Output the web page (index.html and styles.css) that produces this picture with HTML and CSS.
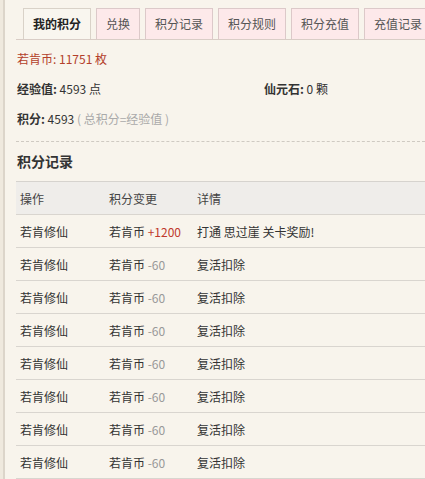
FILE: index.html
```html
<!DOCTYPE html>
<html lang="zh-CN">
<head>
    <meta charset="UTF-8">
    <meta name="viewport" content="width=device-width, initial-scale=1.0">
    <title>我的积分</title>
    <link rel="stylesheet" href="styles.css">
</head>
<body>

<div class="frame">
    <div class="panel">
        <ul class="tabs">
            <li class="tab active">我的积分</li>
            <li class="tab">兑换</li>
            <li class="tab">积分记录</li>
            <li class="tab">积分规则</li>
            <li class="tab">积分充值</li>
            <li class="tab">充值记录</li>
        </ul>

        <div class="info">
            <p class="coin">若肯币: 11751 枚</p>
            <p class="pair">
                <span><b>经验值:</b> 4593 点</span>
                <span><b>仙元石:</b> 0 颗</span>
            </p>
            <p><b>积分:</b> 4593 <span class="note">( 总积分=经验值 )</span></p>
        </div>

        <h2 class="title">积分记录</h2>

        <table class="log">
            <thead>
                <tr><th>操作</th><th>积分变更</th><th>详情</th></tr>
            </thead>
            <tbody>
                <tr><td>若肯修仙</td><td>若肯币 <span class="plus">+1200</span></td><td>打通 思过崖 关卡奖励!</td></tr>
                <tr><td>若肯修仙</td><td>若肯币 <span class="minus">-60</span></td><td>复活扣除</td></tr>
                <tr><td>若肯修仙</td><td>若肯币 <span class="minus">-60</span></td><td>复活扣除</td></tr>
                <tr><td>若肯修仙</td><td>若肯币 <span class="minus">-60</span></td><td>复活扣除</td></tr>
                <tr><td>若肯修仙</td><td>若肯币 <span class="minus">-60</span></td><td>复活扣除</td></tr>
                <tr><td>若肯修仙</td><td>若肯币 <span class="minus">-60</span></td><td>复活扣除</td></tr>
                <tr><td>若肯修仙</td><td>若肯币 <span class="minus">-60</span></td><td>复活扣除</td></tr>
                <tr><td>若肯修仙</td><td>若肯币 <span class="minus">-60</span></td><td>复活扣除</td></tr>
            </tbody>
        </table>
    </div>
</div>

</body>
</html>
```

FILE: styles.css
```css
html, body {
    margin: 0;
    padding: 0;
    background: #f8f4ec;
}
body {
    font-family: "Noto Sans CJK SC", "Liberation Sans", sans-serif;
    font-size: 12px;
    color: #333;
    overflow: hidden;
}
.frame {
    background: #efe9de;
    padding-left: 3px;
    min-height: 479px;
}
.panel {
    background: #f8f4ec;
    border-left: 2px solid #dcd5ca;
    padding-left: 11px;
    min-height: 479px;
}
.tabs {
    list-style: none;
    margin: 0;
    padding: 8px 0 0 7px;
    display: flex;
    border-bottom: 1px solid #d9cdc6;
    white-space: nowrap;
    overflow: hidden;
}
.tab {
    flex: none;
    height: 30px;
    line-height: 30px;
    padding: 0 9px;
    margin-right: 5px;
    margin-bottom: -1px;
    border: 1px solid #dcc9c9;
    border-bottom-color: #d9cdc6;
    background: #fde9ea;
    color: #555;
    font-size: 12px;
}
.tab.active {
    background: #f9f6ef;
    border-color: #d9d2c8;
    border-bottom-color: #f9f6ef;
    color: #222;
    font-weight: bold;
}
.info {
    padding: 4px 0 7px 1px;
    border-bottom: 1px dashed #cfcac2;
}
.info p {
    margin: 0;
    height: 30px;
    line-height: 30px;
}
.coin {
    color: #b3402a;
}
.pair {
    display: grid;
    grid-template-columns: 247px auto;
}
.note {
    color: #aaa;
}
.title {
    margin: 0;
    padding-left: 1px;
    height: 39px;
    line-height: 38px;
    font-size: 14px;
    font-weight: bold;
    color: #333;
    border-bottom: 1px solid #d6d3ce;
}
.log {
    width: 100%;
    border-collapse: collapse;
    table-layout: fixed;
}
.log th, .log td {
    height: 32px;
    padding: 0 0 0 4px;
    text-align: left;
    font-weight: normal;
    border-bottom: 1px solid #d9d5cf;
    white-space: nowrap;
}
.log th {
    background: #efedea;
    color: #444;
}
.log th:nth-child(1), .log td:nth-child(1) { width: 85px; }
.log th:nth-child(2), .log td:nth-child(2) { width: 84px; }
.plus {
    color: #c0392b;
}
.minus {
    color: #999;
}
```
